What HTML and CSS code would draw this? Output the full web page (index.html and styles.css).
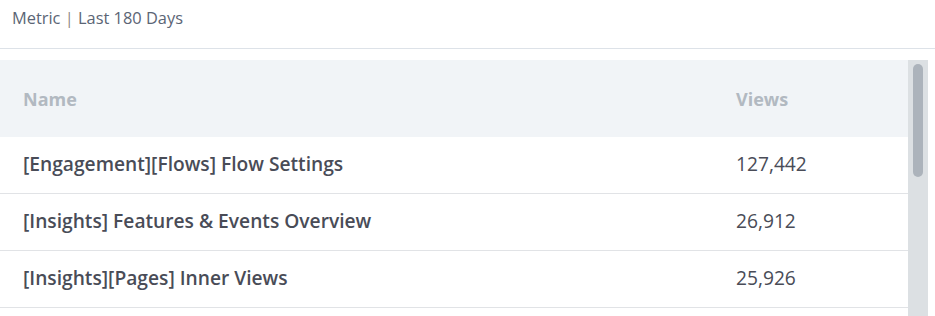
FILE: index.html
```html
<!DOCTYPE html>
<html>
<head>
<meta charset="utf-8">
<link rel="stylesheet" href="styles.css">
</head>
<body>
<div class="page">
  <div class="topbar"><span class="title">Metric <span class="sep">|</span> Last 180 Days</span></div>
  <div class="body">
    <div class="table">
      <div class="row head">
        <div class="c-name">Name</div>
        <div class="c-views">Views</div>
      </div>
      <div class="row">
        <div class="c-name">[Engagement][Flows] Flow Settings</div>
        <div class="c-views">127,442</div>
      </div>
      <div class="row">
        <div class="c-name">[Insights] Features &amp; Events Overview</div>
        <div class="c-views">26,912</div>
      </div>
      <div class="row">
        <div class="c-name">[Insights][Pages] Inner Views</div>
        <div class="c-views">25,926</div>
      </div>
    </div>
    <div class="scroll"><div class="thumb"></div></div>
  </div>
</div>
</body>
</html>
```
FILE: styles.css
```css
html, body {
  margin: 0;
  padding: 0;
  background: #ffffff;
  overflow: hidden;
}
.page {
  width: 935px;
  height: 316px;
  font-family: "Open Sans", "Noto Sans", sans-serif;
  overflow: hidden;
}
.topbar {
  height: 48px;
  border-bottom: 1px solid #dde2e8;
  box-sizing: content-box;
  padding-left: 12px;
  display: flex;
  align-items: flex-start;
}
.title {
  font-size: 16.4px;
  color: #5b6575;
  line-height: 20px;
  margin-top: 8px;
}
.sep {
  color: #8f8a86;
}
.body {
  margin-top: 11px;
  display: flex;
  padding-right: 7px;
}
.table {
  flex: 1;
}
.row {
  display: flex;
  align-items: center;
  height: 56px;
  border-bottom: 1px solid #e1e3e6;
  font-size: 19.2px;
  color: #494c57;
}
.row .c-name,
.row .c-views {
  padding-bottom: 4px;
}
.row.head {
  height: 77px;
  background: #f1f4f7;
  border-bottom: none;
  color: #b2b9c1;
  font-size: 18px;
  font-weight: 700;
}
.row.head .c-name,
.row.head .c-views {
  padding-bottom: 0;
}
.c-name {
  width: 713px;
  padding-left: 23px;
  font-weight: 600;
}
.row.head .c-name { font-weight: 700; }
.c-views {
  flex: 1;
}
.scroll {
  width: 20px;
  background: #dce0e3;
  height: 260px;
  padding-top: 4px;
  box-sizing: border-box;
  display: flex;
  justify-content: center;
}
.thumb {
  width: 10px;
  height: 113px;
  border-radius: 5px;
  background: #acb3bb;
}
```
